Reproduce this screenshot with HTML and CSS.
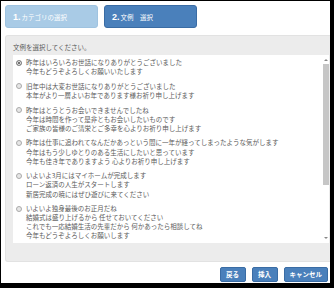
FILE: index.html
```html
<!DOCTYPE html>
<html lang="ja">
<head>
  <meta charset="UTF-8" />
  <title>文例選択</title>
  <link rel="stylesheet" href="styles.css">
</head>
<body>

  <div class="dialog">
    <div class="steps">
      <div class="step done"><b>1.</b>カテゴリの選択</div>
      <div class="step current"><b>2.</b>文例　選択</div>
    </div>

    <div class="panel">
      <p class="hint">文例を選択してください。</p>
      <div class="listbox">
        <div class="options">
          <label class="option">
            <span class="radio checked"></span>
            <span class="text">昨年はいろいろお世話になりありがとうございました<br>今年もどうぞよろしくお願いいたします</span>
          </label>
          <label class="option">
            <span class="radio"></span>
            <span class="text">旧年中は大変お世話になりありがとうございました<br>本年がより一層よいお年であります様お祈り申し上げます</span>
          </label>
          <label class="option">
            <span class="radio"></span>
            <span class="text">昨年はとうとうお会いできませんでしたね<br>今年は時間を作って是非ともお会いしたいものです<br>ご家族の皆様のご清栄とご多幸を心よりお祈り申し上げます</span>
          </label>
          <label class="option">
            <span class="radio"></span>
            <span class="text">昨年は仕事に追われてなんだかあっという間に一年が経ってしまったような気がします<br>今年はもう少しゆとりのある生活にしたいと思っています<br>今年も佳き年でありますよう 心よりお祈り申し上げます</span>
          </label>
          <label class="option">
            <span class="radio"></span>
            <span class="text">いよいよ3月にはマイホームが完成します<br>ローン返済の人生がスタートします<br>新居完成の暁にはぜひ遊びに来てください</span>
          </label>
          <label class="option">
            <span class="radio"></span>
            <span class="text">いよいよ独身最後のお正月だね<br>結婚式は盛り上げるから 任せておいてください<br>これでも一応結婚生活の先輩だから 何かあったら相談してね<br>今年もどうぞよろしくお願いします</span>
          </label>
        </div>
        <div class="scrollbar">
          <span class="arrow up"></span>
          <div class="track"><div class="thumb"></div></div>
          <span class="arrow down"></span>
        </div>
      </div>
    </div>

    <div class="actions">
      <button type="button">戻る</button>
      <button type="button">挿入</button>
      <button type="button">キャンセル</button>
    </div>
  </div>

</body>
</html>
```

FILE: styles.css
```css
* {
  box-sizing: border-box;
}

body {
  margin: 0;
  background: #000;
  font-family: "Noto Sans CJK JP", "Noto Sans", sans-serif;
  color: #5a5a5a;
}

.dialog {
  margin: 1px 0 0 1px;
  width: 329px;
  height: 282px;
  background: #fff;
  padding: 4px 0 0 4px;
  overflow: hidden;
}

.steps {
  display: flex;
  gap: 6px;
}

.step {
  width: 93px;
  height: 23px;
  border-radius: 3px;
  color: #fff;
  font-size: 6.5px;
  display: flex;
  align-items: center;
  padding-left: 7px;
  gap: 1px;
}

.step b {
  font-family: "Liberation Sans", sans-serif;
  font-size: 9px;
}

.step.done {
  background: #a9cbe6;
  border: 1px solid #9fc3e0;
}

.step.current {
  background: #4a80bb;
  border: 1px solid #3a6ca4;
}

.panel {
  margin-top: 7px;
  height: 227px;
  background: #ececec;
  border: 1px solid #e2e2e2;
  border-right: none;
  border-radius: 3px 0 0 3px;
  padding: 0 1px 0 7px;
}

.hint {
  margin: 0;
  padding-top: 7px;
  height: 19px;
  font-size: 6.5px;
  line-height: 9px;
}

.listbox {
  height: 188px;
  background: #fff;
  display: flex;
}

.options {
  flex: 1;
  overflow: hidden;
  padding: 3px 0 0 3px;
}

.option {
  display: flex;
  align-items: flex-start;
  gap: 4px;
  margin-bottom: 5.6px;
  font-size: 6.5px;
  line-height: 9.1px;
  white-space: nowrap;
}

.radio {
  flex: none;
  width: 6px;
  height: 6px;
  margin-top: 1.5px;
  border-radius: 50%;
  border: 1px solid #aaa;
  background: #e6e6e6;
}

.radio.checked {
  background: #444;
  box-shadow: inset 0 0 0 1px #fff;
  border-color: #8a8a8a;
}

.scrollbar {
  width: 7px;
  display: flex;
  flex-direction: column;
  align-items: center;
  padding: 3px 0;
}

.arrow {
  width: 0;
  height: 0;
  border-left: 2px solid transparent;
  border-right: 2px solid transparent;
}

.arrow.up {
  border-bottom: 2px solid #888;
  margin: 1px 0 3px;
}

.arrow.down {
  border-top: 2px solid #888;
  margin: 3px 0 1px;
}

.track {
  flex: 1;
  width: 7px;
}

.thumb {
  width: 6px;
  margin-left: 1px;
  height: 121px;
  background: #c6c6c6;
}

.actions {
  display: flex;
  justify-content: flex-end;
  gap: 6px;
  margin-top: 5px;
  padding-right: 2px;
}

button {
  height: 15px;
  min-width: 26px;
  padding: 0 5px;
  background: #4a80bb;
  border: 1px solid #3a6ca4;
  border-radius: 2px;
  color: #fff;
  font-family: inherit;
  font-size: 6.5px;
  font-weight: 700;
  line-height: 1;
}
```
